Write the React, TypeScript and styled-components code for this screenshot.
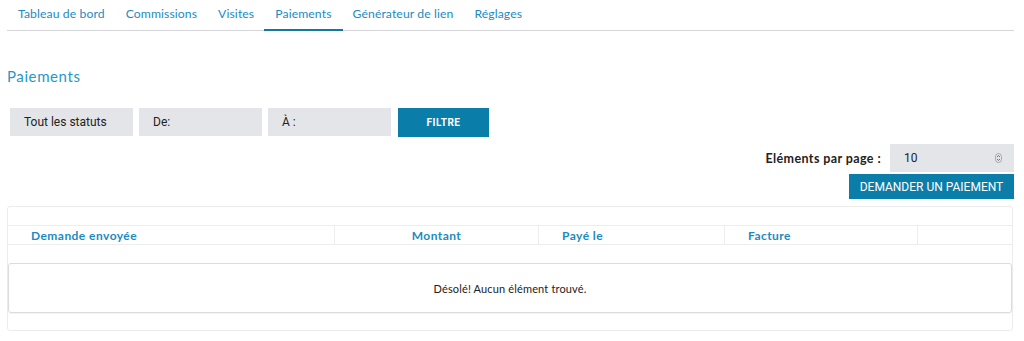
import * as React from "react";
import styled, { createGlobalStyle } from "styled-components";

const GlobalStyle = createGlobalStyle`
  body {
    margin: 0;
    background: #fff;
    font-family: Lato, "Open Sans", sans-serif;
  }
`;

const SPage = styled.div`
  width: 1024px;
  padding: 0 10px 0 7px;
  box-sizing: border-box;
`;

const STabs = styled.nav`
  display: flex;
  height: 30px;
  border-bottom: 1px solid #d4d6da;
`;

interface ITab {
  active?: boolean;
}

const STab = styled.a<ITab>`
  display: flex;
  align-items: center;
  padding: 0 11px 2px 11px;
  height: 27px;
  font-size: 12.2px;
  letter-spacing: 0.1px;
  color: #1d8bbf;
  text-decoration: none;
  border-bottom: 2px solid ${(p) => (p.active ? "#15799f" : "transparent")};
  & + & {
    margin-left: -1px;
  }
`;

const STitle = styled.h2`
  margin: 36px 0 0 0;
  font-size: 15px;
  font-weight: 400;
  color: #2598c9;
  letter-spacing: 0.6px;
`;

const SFilters = styled.div`
  display: flex;
  gap: 6px;
  margin: 23px 0 0 3px;
`;

const SField = styled.div`
  width: 123px;
  height: 28px;
  background: #e4e5e9;
  display: flex;
  align-items: center;
  box-sizing: border-box;
  padding-left: 14px;
  font-family: Roboto, "Liberation Sans", sans-serif;
  font-size: 12px;
  color: #222;
`;

const SFilterButton = styled.button`
  width: 91px;
  height: 29px;
  margin-left: 1px;
  border: none;
  background: #0a7ea9;
  color: #fff;
  font-family: Roboto, "Liberation Sans", sans-serif;
  font-weight: 700;
  font-size: 10px;
  letter-spacing: 0.5px;
`;

const SActions = styled.div`
  display: flex;
  flex-direction: column;
  align-items: flex-end;
  margin-top: 7px;
`;

const SPerPage = styled.div`
  display: flex;
  align-items: center;
  gap: 9px;
`;

const SLabel = styled.span`
  font-weight: 700;
  font-size: 12.5px;
  letter-spacing: 0.4px;
  color: #222;
`;

const SSelect = styled.div`
  width: 124px;
  height: 28px;
  background: #e4e5e9;
  display: flex;
  align-items: center;
  justify-content: space-between;
  box-sizing: border-box;
  padding: 0 12px 0 14px;
  font-family: Roboto, "Liberation Sans", sans-serif;
  font-size: 12px;
  color: #222;
`;

const SRequestButton = styled.button`
  margin-top: 2px;
  width: 165px;
  height: 25px;
  border: none;
  background: #0a7ea9;
  color: #fff;
  font-family: Roboto, "Liberation Sans", sans-serif;
  font-size: 12px;
  padding: 0;
`;

const SCard = styled.div`
  margin-top: 7px;
  width: 1006px;
  border: 1px solid #ececec;
  border-radius: 3px;
  padding: 18px 0 17px;
  box-sizing: border-box;
`;

const SHeadRow = styled.div`
  display: grid;
  grid-template-columns: 326px 204px 186px 193px 1fr;
  height: 18px;
  border-top: 1px solid #ededed;
  border-bottom: 1px solid #ededed;
`;

interface IHeadCell {
  center?: boolean;
}

const SHeadCell = styled.div<IHeadCell>`
  display: flex;
  align-items: center;
  justify-content: ${(p) => (p.center ? "center" : "flex-start")};
  padding-left: ${(p) => (p.center ? "0" : "23px")};
  border-left: 1px solid #ededed;
  font-weight: 700;
  font-size: 12px;
  letter-spacing: 0.45px;
  color: #1d8bbf;
  &:first-child {
    border-left: none;
  }
`;

const SEmpty = styled.div`
  margin-top: 18px;
  height: 48px;
  border: 1px solid #dcdcdc;
  border-radius: 3px;
  box-shadow: 0 1px 1px rgba(0, 0, 0, 0.05);
  display: flex;
  align-items: center;
  justify-content: center;
  font-size: 11px;
  letter-spacing: 0.15px;
  color: #222;
`;

const tabs = [
  "Tableau de bord",
  "Commissions",
  "Visites",
  "Paiements",
  "Générateur de lien",
  "Réglages",
];

const SortIcon = () => (
  <svg width="7" height="10" viewBox="0 0 7 10">
    <rect x="0.5" y="0.5" width="6" height="9" rx="3" fill="none" stroke="#999" strokeWidth="0.8" />
    <path d="M2 4 L3.5 2.6 L5 4 M2 6 L3.5 7.4 L5 6" fill="none" stroke="#555" strokeWidth="0.8" />
  </svg>
);

const App = () => {
  return (
    <SPage>
      <GlobalStyle />
      <STabs>
        {tabs.map((t) => (
          <STab key={t} active={t === "Paiements"}>
            {t}
          </STab>
        ))}
      </STabs>
      <STitle>Paiements</STitle>
      <SFilters>
        <SField>Tout les statuts</SField>
        <SField>De:</SField>
        <SField>À :</SField>
        <SFilterButton>FILTRE</SFilterButton>
      </SFilters>
      <SActions>
        <SPerPage>
          <SLabel>Eléments par page :</SLabel>
          <SSelect>
            <span>10</span>
            <SortIcon />
          </SSelect>
        </SPerPage>
        <SRequestButton>DEMANDER UN PAIEMENT</SRequestButton>
      </SActions>
      <SCard>
        <SHeadRow>
          <SHeadCell>Demande envoyée</SHeadCell>
          <SHeadCell center>Montant</SHeadCell>
          <SHeadCell>Payé le</SHeadCell>
          <SHeadCell>Facture</SHeadCell>
          <SHeadCell />
        </SHeadRow>
        <SEmpty>Désolé! Aucun élément trouvé.</SEmpty>
      </SCard>
    </SPage>
  );
};

export default App;
